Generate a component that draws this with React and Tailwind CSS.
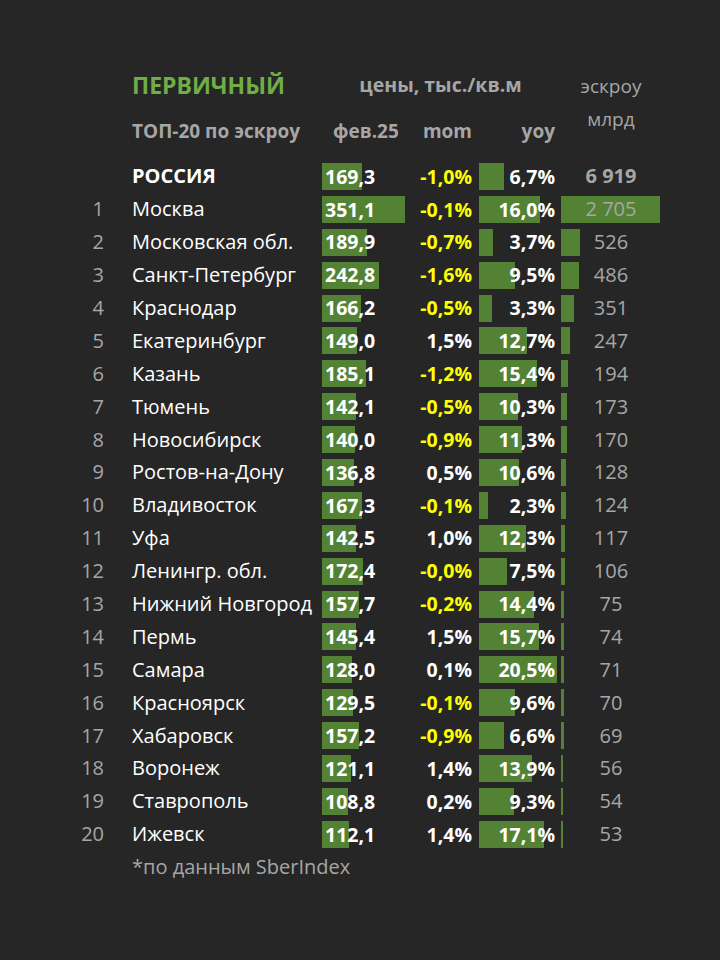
const rows = [
  ["", "РОССИЯ", 169.3, "-1,0%", 6.7, "6 919", 0],
  ["1", "Москва", 351.1, "-0,1%", 16.0, "2 705", 2705],
  ["2", "Московская обл.", 189.9, "-0,7%", 3.7, "526", 526],
  ["3", "Санкт-Петербург", 242.8, "-1,6%", 9.5, "486", 486],
  ["4", "Краснодар", 166.2, "-0,5%", 3.3, "351", 351],
  ["5", "Екатеринбург", 149.0, "1,5%", 12.7, "247", 247],
  ["6", "Казань", 185.1, "-1,2%", 15.4, "194", 194],
  ["7", "Тюмень", 142.1, "-0,5%", 10.3, "173", 173],
  ["8", "Новосибирск", 140.0, "-0,9%", 11.3, "170", 170],
  ["9", "Ростов-на-Дону", 136.8, "0,5%", 10.6, "128", 128],
  ["10", "Владивосток", 167.3, "-0,1%", 2.3, "124", 124],
  ["11", "Уфа", 142.5, "1,0%", 12.3, "117", 117],
  ["12", "Ленингр. обл.", 172.4, "-0,0%", 7.5, "106", 106],
  ["13", "Нижний Новгород", 157.7, "-0,2%", 14.4, "75", 75],
  ["14", "Пермь", 145.4, "1,5%", 15.7, "74", 74],
  ["15", "Самара", 128.0, "0,1%", 20.5, "71", 71],
  ["16", "Красноярск", 129.5, "-0,1%", 9.6, "70", 70],
  ["17", "Хабаровск", 157.2, "-0,9%", 6.6, "69", 69],
  ["18", "Воронеж", 121.1, "1,4%", 13.9, "56", 56],
  ["19", "Ставрополь", 108.8, "0,2%", 9.3, "54", 54],
  ["20", "Ижевск", 112.1, "1,4%", 17.1, "53", 53],
];

const fmt = (v) => v.toFixed(1).replace(".", ",");

const Row = ({ r, first }) => {
  const [rank, name, price, mom, yoy, escrow, escrowNum] = r;
  const neg = mom.startsWith("-");
  return (
    <div className="flex h-[32.9px] items-center text-[19.5px] leading-none">
      <div className="w-[104px] text-right text-[20px] text-[#a6a6a6]">{rank}</div>
      <div className={`ml-[28px] w-[190px] whitespace-nowrap text-[20px] text-white ${first ? "font-bold" : ""}`}>
        {name}
      </div>
      <div className="relative flex h-[27px] w-[88px] items-center">
        <div className="absolute inset-y-0 left-0 bg-[#548235]" style={{ width: price * 0.2364 }} />
        <span className="relative pl-[3px] font-bold text-white">{fmt(price)}</span>
      </div>
      <div className={`w-[62px] text-right font-bold ${neg ? "text-[#ffff00]" : "text-white"}`}>{mom}</div>
      <div className="relative ml-[7px] flex h-[27px] w-[76px] items-center justify-end">
        <div className="absolute inset-y-0 left-0 bg-[#548235]" style={{ width: yoy * 3.79 }} />
        <span className="relative font-bold text-white">{fmt(yoy)}%</span>
      </div>
      <div className="relative ml-[6px] flex h-[27px] w-[100px] items-center justify-center">
        {escrowNum > 0 && (
          <div className="absolute inset-y-0 left-0 bg-[#548235]" style={{ width: (escrowNum / 2705) * 99 }} />
        )}
        <span className={`relative text-[20px] text-[#a6a6a6] ${first ? "font-bold" : ""}`}>{escrow}</span>
      </div>
    </div>
  );
};

export default function App() {
  return (
    <div
      className="min-h-[960px] w-[720px] bg-[#262626] pt-[62px]"
      style={{ fontFamily: '"Open Sans", "Noto Sans", sans-serif' }}
    >
      <div className="flex">
        <div className="w-[132px]" />
        <div className="flex w-[190px] flex-col font-bold">
          <div className="flex h-[46px] items-center text-[23px] text-[#70ad47]">ПЕРВИЧНЫЙ</div>
          <div className="flex h-[46px] items-center whitespace-nowrap text-[19px] text-[#a6a6a6]">ТОП-20 по эскроу</div>
        </div>
        <div className="flex w-[233px] flex-col font-bold text-[#a6a6a6]">
          <div className="flex h-[46px] items-center justify-center pl-[4px] text-[19.5px]">цены, тыс./кв.м</div>
          <div className="flex h-[46px] items-center text-[19px]">
            <div className="w-[88px] pl-[11px]">фев.25</div>
            <div className="w-[62px] text-right">mom</div>
            <div className="w-[83px] text-right">yoy</div>
          </div>
        </div>
        <div className="ml-[6px] flex w-[100px] flex-col items-center pt-[8px] text-[19px] leading-[33px] text-[#a6a6a6]">
          <div>эскроу</div>
          <div>млрд</div>
        </div>
      </div>
      <div className="mt-[6px]">
        {rows.map((r, i) => (
          <Row key={i} r={r} first={i === 0} />
        ))}
      </div>
      <div className="ml-[132px] flex h-[33px] items-center text-[20px] text-[#a6a6a6]">*по данным SberIndex</div>
    </div>
  );
}
